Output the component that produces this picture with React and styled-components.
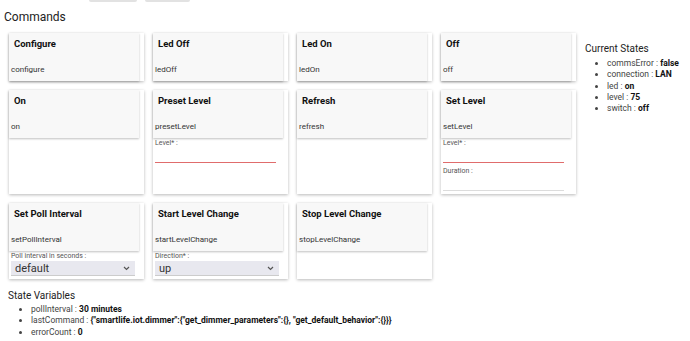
import React from "react";
import styled, { createGlobalStyle } from "styled-components";

const Global = createGlobalStyle`
  body {
    margin: 0;
    background: #fff;
    font-family: Roboto, "Liberation Sans", sans-serif;
    color: #222;
  }
`;

const Page = styled.div`
  width: 690px;
  height: 341px;
  overflow: hidden;
  position: relative;
`;

const TopBar = styled.div`
  display: flex;
  gap: 8px;
  padding-left: 89px;
  height: 2px;
  overflow: hidden;
`;

const TopBtn = styled.div`
  width: ${(p) => p.w}px;
  height: 2px;
  background: #e2e2e2;
  border-radius: 0 0 2px 2px;
`;

const Layout = styled.div`
  display: flex;
`;

const Main = styled.div`
  width: 580px;
`;

const Heading = styled.div`
  font-size: 12px;
  line-height: 14px;
  margin: 8px 0 0 4px;
  color: #222;
`;

const Grid = styled.div`
  display: grid;
  grid-template-columns: repeat(4, 135px);
  column-gap: 9px;
  row-gap: 9px;
  margin: 9px 0 0 9px;
`;

const Card = styled.div`
  background: #fff;
  box-shadow: 0 1px 3px rgba(0, 0, 0, 0.28);
  display: flex;
  flex-direction: column;
`;

const CmdButton = styled.div`
  height: 48px;
  margin-right: 5px;
  background: #f8f8f8;
  box-shadow: 0 1px 2px rgba(0, 0, 0, 0.25);
  position: relative;
`;

const CmdTitle = styled.div`
  position: absolute;
  left: 5px;
  top: 5px;
  font-size: 9.5px;
  font-weight: 700;
  color: #111;
`;

const CmdName = styled.div`
  position: absolute;
  left: 2px;
  top: 32px;
  font-size: 8px;
  color: #333;
`;

const Field = styled.div`
  padding: 1px 12px 3px 2px;
`;

const Label = styled.div`
  font-size: 7px;
  color: #555;
  line-height: 8px;
`;

const TextLine = styled.div`
  height: 15px;
  border-bottom: 1px solid ${(p) => (p.$req ? "#e06c6c" : "#dcdcdc")};
`;

const Select = styled.div`
  height: 15px;
  width: 124px;
  margin-top: 1px;
  background: #e8e8ef;
  border-bottom: 1px solid #ccc;
  display: flex;
  align-items: center;
  justify-content: space-between;
  padding: 0 5px 0 4px;
  box-sizing: border-box;
  font-size: 11px;
  color: #333;
`;

const Chevron = () => (
  <svg width="7" height="5" viewBox="0 0 7 5">
    <path d="M1 1 L3.5 3.5 L6 1" fill="none" stroke="#555" strokeWidth="1.2" />
  </svg>
);

const Aside = styled.div`
  padding: 41px 0 0 5px;
`;

const SideTitle = styled.div`
  font-size: 10px;
  color: #222;
`;

const List = styled.ul`
  margin: ${(p) => p.$m};
  padding-left: ${(p) => p.$pl}px;
  font-size: 8.5px;
  line-height: 11.3px;
  color: #444;
`;

const Item = styled.li`
  b {
    color: #111;
  }
`;

const Vars = styled.div`
  margin: 11px 0 0 8px;
`;

const commands = [
  { title: "Configure", name: "configure" },
  { title: "Led Off", name: "ledOff" },
  { title: "Led On", name: "ledOn" },
  { title: "Off", name: "off" },
  { title: "On", name: "on" },
  { title: "Preset Level", name: "presetLevel", fields: [{ label: "Level* :", req: true }] },
  { title: "Refresh", name: "refresh" },
  {
    title: "Set Level",
    name: "setLevel",
    fields: [
      { label: "Level* :", req: true },
      { label: "Duration :" },
    ],
  },
  {
    title: "Set Poll Interval",
    name: "setPollInterval",
    fields: [{ label: "Poll interval in seconds :", select: "default" }],
  },
  {
    title: "Start Level Change",
    name: "startLevelChange",
    fields: [{ label: "Direction* :", select: "up" }],
  },
  { title: "Stop Level Change", name: "stopLevelChange" },
];

const states = [
  ["commsError", "false"],
  ["connection", "LAN"],
  ["led", "on"],
  ["level", "75"],
  ["switch", "off"],
];

const vars = [
  ["pollInterval", "30 minutes"],
  ["lastCommand", '{"smartlife.iot.dimmer":{"get_dimmer_parameters":{}, "get_default_behavior":{}}}'],
  ["errorCount", "0"],
];

export default function App() {
  return (
    <Page>
      <Global />
      <TopBar>
        <TopBtn w={48} />
        <TopBtn w={45} />
      </TopBar>
      <Layout>
        <Main>
          <Heading>Commands</Heading>
          <Grid>
            {commands.map((c) => (
              <Card key={c.name}>
                <CmdButton>
                  <CmdTitle>{c.title}</CmdTitle>
                  <CmdName>{c.name}</CmdName>
                </CmdButton>
                {c.fields &&
                  c.fields.map((f) => (
                    <Field key={f.label}>
                      <Label>{f.label}</Label>
                      {f.select ? (
                        <Select>
                          {f.select}
                          <Chevron />
                        </Select>
                      ) : (
                        <TextLine $req={f.req} />
                      )}
                    </Field>
                  ))}
              </Card>
            ))}
          </Grid>
          <Vars>
            <SideTitle>State Variables</SideTitle>
            <List $m="3px 0 0 0" $pl={23}>
              {vars.map(([k, v]) => (
                <Item key={k}>
                  {k} : <b>{v}</b>
                </Item>
              ))}
            </List>
          </Vars>
        </Main>
        <Aside>
          <SideTitle>Current States</SideTitle>
          <List $m="4px 0 0 0" $pl={22}>
            {states.map(([k, v]) => (
              <Item key={k}>
                {k} : <b>{v}</b>
              </Item>
            ))}
          </List>
        </Aside>
      </Layout>
    </Page>
  );
}
